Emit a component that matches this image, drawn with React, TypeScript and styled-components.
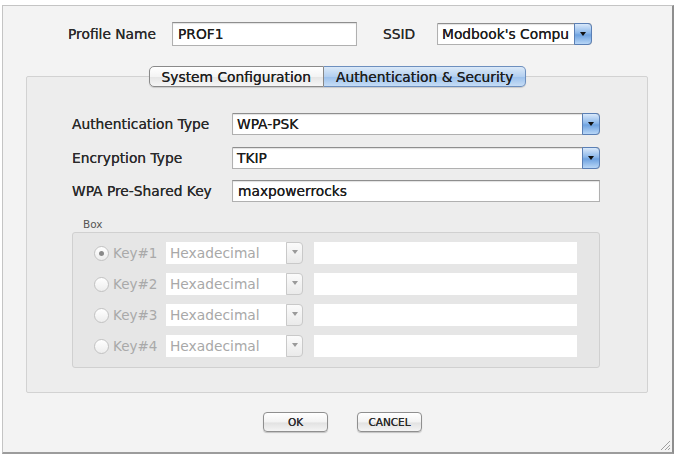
import React from "react";
import styled, { createGlobalStyle } from "styled-components";

const GlobalStyle = createGlobalStyle`
  html, body {
    margin: 0;
    padding: 0;
    background: #ffffff;
  }
  body {
    font-family: "DejaVu Sans", "Liberation Sans", sans-serif;
    font-size: 12px;
    color: #2b2b2b;
  }
`;

const Window = styled.div`
  margin: 5px 0 0 2px;
  width: 669px;
  height: 446px;
  box-sizing: content-box;
  background: #f3f3f3;
  border: 1px solid #c4c4c4;
  border-right: 2px solid #8e8e8e;
  border-bottom: 2px solid #9c9c9c;
  display: flex;
  flex-direction: column;
`;

const Header = styled.div`
  display: flex;
  align-items: center;
  margin-top: 16px;
  padding-left: 65px;
  height: 24px;
`;

const Label = styled.span<{ $width?: number }>`
  display: inline-block;
  width: ${(p) => (p.$width ? `${p.$width}px` : "auto")};
  font-size: 13.8px;
  color: #2a2a2a;
  text-shadow: 0 0 0.4px #2a2a2a;
  white-space: nowrap;
`;

const TextField = styled.div<{ $width: number; $height?: number }>`
  width: ${(p) => p.$width}px;
  height: ${(p) => p.$height || 22}px;
  box-sizing: border-box;
  background: #ffffff;
  border: 1px solid #b0b0b0;
  border-top-color: #8e8e8e;
  box-shadow: inset 0 1px 1px rgba(0, 0, 0, 0.12);
  padding: 0 5px;
  display: flex;
  align-items: center;
  font-size: 13.8px;
  color: #1e1e1e;
  text-shadow: 0 0 0.4px #1e1e1e;
  white-space: nowrap;
  overflow: hidden;
`;

const Select = styled.div<{ $width: number }>`
  width: ${(p) => p.$width}px;
  height: 22px;
  box-sizing: border-box;
  display: flex;
  background: #ffffff;
  border: 1px solid #b0b0b0;
  border-top-color: #8e8e8e;
  box-shadow: inset 0 1px 1px rgba(0, 0, 0, 0.12);
  border-radius: 0 4px 4px 0;
`;

const SelectValue = styled.div`
  flex: 1;
  padding: 0 4px;
  display: flex;
  align-items: center;
  font-size: 13.8px;
  color: #1e1e1e;
  text-shadow: 0 0 0.4px #1e1e1e;
  white-space: nowrap;
  overflow: hidden;
`;

const AquaArrow = styled.div`
  width: 16px;
  margin: -1px -1px -1px 0;
  border-radius: 0 4px 4px 0;
  border: 1px solid #5a7fb5;
  background: linear-gradient(#d8e8fa 0%, #8db8ea 45%, #6ea2e0 55%, #b8d6f6 100%);
  display: flex;
  align-items: center;
  justify-content: center;
`;

const Triangle = styled.span<{ $color?: string }>`
  width: 0;
  height: 0;
  border-left: 3px solid transparent;
  border-right: 3px solid transparent;
  border-top: 4px solid ${(p) => p.$color || "#111"};
`;

const ProfileLabel = styled(Label)`
  width: 104px;
`;

const SsidLabel = styled(Label)`
  margin-left: 26px;
  width: 54px;
`;

const TabBar = styled.div`
  display: flex;
  justify-content: center;
  margin-top: 20px;
  position: relative;
  z-index: 1;
  height: 21px;
`;

const Tab = styled.div<{ $active?: boolean; $first?: boolean }>`
  height: 21px;
  box-sizing: border-box;
  display: flex;
  align-items: center;
  padding: 0 ${(p) => (p.$first ? "12px" : "12px")};
  font-size: 13.8px;
  color: #1f1f1f;
  text-shadow: 0 0 0.4px #1f1f1f;
  border: 1px solid #8a8a8a;
  border-left-width: ${(p) => (p.$first ? "1px" : "0")};
  border-radius: ${(p) => (p.$first ? "5px 0 0 5px" : "0 5px 5px 0")};
  background: ${(p) =>
    p.$active
      ? "linear-gradient(#dbe9f8 0%, #b4d0f0 50%, #9ec2ec 55%, #c6ddf6 100%)"
      : "linear-gradient(#ffffff 0%, #f4f4f4 50%, #e6e6e6 55%, #f6f6f6 100%)"};
  box-shadow: 0 1px 1px rgba(0, 0, 0, 0.15);
  ${(p) => (p.$active ? "border-color: #6d8fbe;" : "")}
`;

const Panel = styled.div`
  margin: -11px 0 0 23px;
  width: 622px;
  height: 317px;
  box-sizing: border-box;
  background: #ededed;
  border: 1px solid #d2d2d2;
  border-radius: 2px;
  padding: 36px 0 0 45px;
  display: flex;
  flex-direction: column;
`;

const FormRows = styled.div`
  display: flex;
  flex-direction: column;
  gap: 11.5px;
`;

const FormRow = styled.div`
  display: flex;
  align-items: center;
`;

const GroupCaption = styled.div`
  margin: 16px 0 0 11px;
  font-size: 10.5px;
  color: #555;
  height: 13px;
`;

const GroupBox = styled.div`
  margin-top: 1px;
  width: 528px;
  box-sizing: border-box;
  border: 1px solid #d0d0d0;
  border-radius: 3px;
  background: #e6e6e6;
  padding: 9px 0 10px 21px;
  display: flex;
  flex-direction: column;
  gap: 9px;
`;

const KeyRow = styled.div`
  display: flex;
  align-items: center;
  height: 22px;
`;

const Radio = styled.span<{ $checked?: boolean }>`
  width: 15px;
  height: 15px;
  box-sizing: border-box;
  border-radius: 50%;
  border: 1px solid #c2c2c2;
  background: linear-gradient(#ffffff, #ededed);
  display: flex;
  align-items: center;
  justify-content: center;
  &::after {
    content: "";
    display: ${(p) => (p.$checked ? "block" : "none")};
    width: 5px;
    height: 5px;
    border-radius: 50%;
    background: #8a8a8a;
  }
`;

const KeyLabel = styled.span`
  margin-left: 4px;
  width: 53px;
  font-size: 13.5px;
  color: #a9a9a9;
`;

const DisabledSelect = styled.div`
  width: 137px;
  height: 22px;
  display: flex;
`;

const DisabledValue = styled.div`
  flex: 1;
  background: #ffffff;
  display: flex;
  align-items: center;
  padding-left: 4px;
  font-size: 13.8px;
  color: #a8a8a8;
`;

const DisabledArrow = styled.div`
  width: 17px;
  box-sizing: border-box;
  border: 1px solid #c9c9c9;
  border-radius: 0 4px 4px 0;
  background: linear-gradient(#fbfbfb, #eaeaea);
  display: flex;
  align-items: flex-start;
  justify-content: center;
  padding-top: 7px;
`;

const KeyInput = styled.div`
  margin-left: 11px;
  width: 263px;
  height: 22px;
  background: #ffffff;
`;

const Buttons = styled.div`
  display: flex;
  justify-content: center;
  gap: 29px;
  margin-top: 19px;
  padding-left: 10px;
`;

const PushButton = styled.button`
  width: 65px;
  height: 20px;
  box-sizing: border-box;
  border: 1px solid #8f8f8f;
  border-radius: 4px;
  background: linear-gradient(#ffffff 0%, #f2f2f2 50%, #e2e2e2 55%, #f4f4f4 100%);
  box-shadow: 0 1px 1px rgba(0, 0, 0, 0.2);
  font-family: "DejaVu Sans", "Liberation Sans", sans-serif;
  font-size: 10.5px;
  color: #2a2a2a;
  text-shadow: 0 0 0.4px #2a2a2a;
  padding: 0;
`;

const Footer = styled.div`
  flex: 1;
  display: flex;
  justify-content: flex-end;
  align-items: flex-end;
  padding: 0 1px 1px 0;
`;

const ResizeGrip = () => (
  <svg width="12" height="12" viewBox="0 0 12 12">
    <path d="M11 2 L2 11 M11 6 L6 11 M11 9 L9 11" stroke="#a0a0a0" strokeWidth="1" />
  </svg>
);

const keys = ["Key#1", "Key#2", "Key#3", "Key#4"];

export default function App() {
  return (
    <>
      <GlobalStyle />
      <Window>
        <Header>
          <ProfileLabel>Profile Name</ProfileLabel>
          <TextField $width={185} $height={24}>
            PROF1
          </TextField>
          <SsidLabel>SSID</SsidLabel>
          <Select $width={155}>
            <SelectValue>Modbook's Compu</SelectValue>
            <AquaArrow>
              <Triangle />
            </AquaArrow>
          </Select>
        </Header>

        <TabBar>
          <Tab $first>System Configuration</Tab>
          <Tab $active>Authentication &amp; Security</Tab>
        </TabBar>

        <Panel>
          <FormRows>
            <FormRow>
              <Label $width={160}>Authentication Type</Label>
              <Select $width={368}>
                <SelectValue>WPA-PSK</SelectValue>
                <AquaArrow>
                  <Triangle />
                </AquaArrow>
              </Select>
            </FormRow>
            <FormRow>
              <Label $width={160}>Encryption Type</Label>
              <Select $width={368}>
                <SelectValue>TKIP</SelectValue>
                <AquaArrow>
                  <Triangle />
                </AquaArrow>
              </Select>
            </FormRow>
            <FormRow>
              <Label $width={160}>WPA Pre-Shared Key</Label>
              <TextField $width={368}>maxpowerrocks</TextField>
            </FormRow>
          </FormRows>

          <GroupCaption>Box</GroupCaption>
          <GroupBox>
            {keys.map((k, i) => (
              <KeyRow key={k}>
                <Radio $checked={i === 0} />
                <KeyLabel>{k}</KeyLabel>
                <DisabledSelect>
                  <DisabledValue>Hexadecimal</DisabledValue>
                  <DisabledArrow>
                    <Triangle $color="#9a9a9a" />
                  </DisabledArrow>
                </DisabledSelect>
                <KeyInput />
              </KeyRow>
            ))}
          </GroupBox>
        </Panel>

        <Buttons>
          <PushButton>OK</PushButton>
          <PushButton>CANCEL</PushButton>
        </Buttons>
        <Footer>
          <ResizeGrip />
        </Footer>
      </Window>
    </>
  );
}
